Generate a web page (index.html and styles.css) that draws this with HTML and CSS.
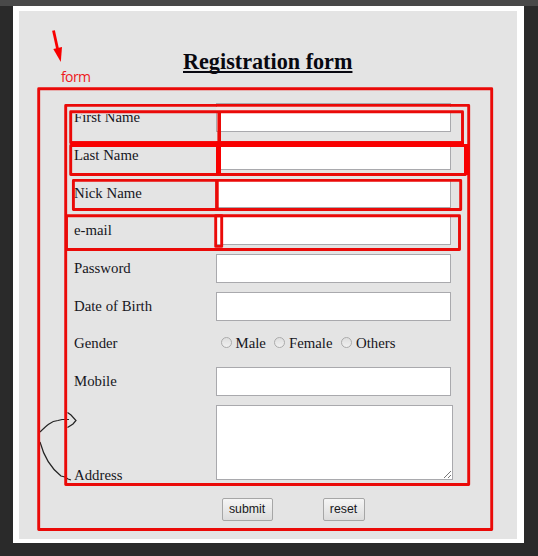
FILE: index.html
```html
<!DOCTYPE html>
<html lang="en">
<head>
<meta charset="utf-8">
<title>Registration form</title>
<link rel="stylesheet" href="styles.css">
</head>
<body>
<main class="sheet">
  <div class="panel">
    <h1 class="title">Registration form</h1>
    <form class="form">
      <div class="fields">
        <label for="first">First Name</label><input class="text" id="first" type="text">
        <label for="last">Last Name</label><input class="text" id="last" type="text">
        <label for="nick">Nick Name</label><input class="text" id="nick" type="text">
        <label for="email">e-mail</label><input class="text" id="email" type="text">
        <label for="password">Password</label><input class="text" id="password" type="password">
        <label for="birth">Date of Birth</label><input class="text" id="birth" type="text">
        <span>Gender</span>
        <div class="choices">
          <label class="choice male"><input class="radio" type="radio" name="gender">Male</label>
          <label class="choice female"><input class="radio" type="radio" name="gender">Female</label>
          <label class="choice"><input class="radio" type="radio" name="gender">Others</label>
        </div>
        <label for="mobile">Mobile</label><input class="text" id="mobile" type="text">
        <label class="address" for="address">Address</label>
        <div class="area">
          <textarea class="text" id="address"></textarea>
          <svg class="grip" width="9" height="9" viewBox="0 0 9 9"><path d="M1 8L8 1M5 8L8 5"/></svg>
        </div>
      </div>
      <div class="actions">
        <button class="button submit" type="button">submit</button>
        <button class="button reset" type="button">reset</button>
      </div>
    </form>
  </div>
</main>
<svg class="notes" width="538" height="556" viewBox="0 0 538 556">
  <path class="ink" d="M71 480L68 479L65 477L61 476C52 469 44 457 40 442M40 432C46 426 51 421 58 420.5L62 419.5L69 419.5M67.5 412.5L71 415L76 420.5L73 424L67.5 427.5"/>
  <path class="fade" d="M216 107H451V111H216Z"/>
  <path class="cover" d="M72 107H216V114H72Z"/>
  <g class="marks">
    <rect x="38.7" y="88.7" width="453" height="440.8"/>
    <rect x="65.7" y="105.4" width="403" height="379.1"/>
    <rect x="70.7" y="111.7" width="391.8" height="31"/>
    <rect x="70.7" y="145.4" width="394.8" height="29.1"/>
    <rect x="73.4" y="180.4" width="387.3" height="29.1"/>
    <rect x="66.5" y="215.7" width="393" height="33.8"/>
    <rect x="215.7" y="215.7" width="6" height="30.7"/>
  </g>
  <path class="divider" d="M219.2 112V144M216.9 180V209"/>
  <path class="bright" d="M71 141.2H464V144H469V175H464V147H71ZM216 145H221V174H216Z"/>
  <path class="shaft" d="M53.5 30.5L58 51"/>
  <path class="bright" d="M53.3 49L62 47L60.8 62Z"/>
  <text class="caption" x="61" y="82" textLength="30">form</text>
</svg>
</body>
</html>
```
FILE: styles.css
```css
* { box-sizing: border-box; }

body {
  margin: 0;
  height: 556px;
  padding: 0 14px 13px 13px;
  border-top: 6px solid #494949;
  background: #2a2a2a;
  color: #16161c;
  font: 14.8px/17px "Liberation Serif", serif;
  overflow: hidden;
}

.sheet {
  height: 537px;
  padding: 5px 7px 4px 6px;
  background: #fff;
}

.panel {
  height: 528px;
  padding: 38px 0 0 55px;
  background: #e4e4e4;
}

.title {
  width: 170px;
  margin: 0 0 29.3px 109px;
  font-size: 22.2px;
  line-height: 25px;
  white-space: nowrap;
  text-decoration: underline;
  text-decoration-thickness: 1.5px;
  text-decoration-skip-ink: none;
  text-underline-offset: 2px;
  color: #080810;
}

.fields {
  display: grid;
  grid-template-columns: 142px 237px;
  grid-template-rows: repeat(8, 29px) 75px;
  row-gap: 8.66px;
  align-items: center;
}

.text {
  display: block;
  width: 235px;
  height: 29px;
  margin: 0;
  border: 1px solid #a9a9ad;
  border-radius: 0;
  background: #fff;
}

.choices { display: flex; }

.choice {
  display: flex;
  align-items: center;
}

.male { width: 53.5px; }
.female { width: 67px; }

.radio {
  appearance: none;
  flex: none;
  width: 11px;
  height: 11px;
  margin: -3px 4px 0 4.5px;
  border: 1px solid #ababab;
  border-radius: 50%;
  background: linear-gradient(#dedede, #f0f0f0);
}

.address {
  align-self: end;
  margin-bottom: -4px;
}

.area {
  position: relative;
  height: 75px;
}

.area .text {
  width: 237px;
  height: 75px;
  resize: none;
}

.grip {
  position: absolute;
  right: 1px;
  bottom: 1px;
  fill: none;
  stroke: #777;
}

.actions {
  display: flex;
  gap: 50px;
  margin: 18.4px 0 0 147.5px;
}

.button {
  height: 23px;
  padding: 0;
  border: 1px solid #a6a6a6;
  border-radius: 2px;
  background: linear-gradient(#f5f5f5, #dcdcdc);
  color: #181820;
  font: 12.3px "Liberation Sans", sans-serif;
}

.submit { width: 51px; }
.reset { width: 42px; }

.notes {
  position: absolute;
  top: 0;
  left: 0;
  pointer-events: none;
}

.marks {
  fill: none;
  stroke: #ea0a08;
  stroke-width: 2.9;
  stroke-linejoin: round;
}

.divider {
  stroke: #ea0a08;
  stroke-width: 3.6;
}

.ink {
  fill: none;
  stroke: #222;
  stroke-width: 1.2;
}

.fade { fill: #f1e4e4; }
.cover { fill: #e4e4e4; }
.bright { fill: #f80000; }

.shaft {
  stroke: #f80000;
  stroke-width: 2.8;
}

.caption {
  fill: #ee1820;
  font: 14px "Open Sans", sans-serif;
}
```
